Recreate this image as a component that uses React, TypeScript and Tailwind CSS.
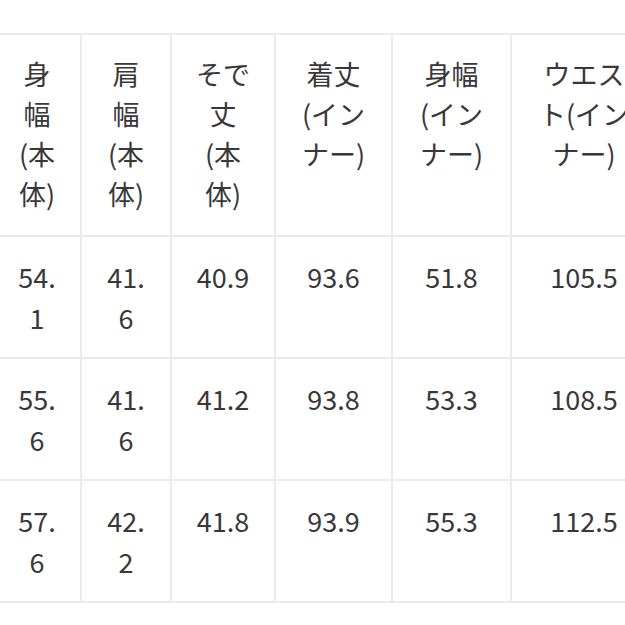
const font = { fontFamily: '"Noto Sans CJK JP", "Noto Sans", sans-serif' };

const headers: string[][] = [
  ["身", "幅", "(本", "体)"],
  ["肩", "幅", "(本", "体)"],
  ["そで", "丈", "(本", "体)"],
  ["着丈", "(イン", "ナー)"],
  ["身幅", "(イン", "ナー)"],
  ["ウエス", "ト(イン", "ナー)"],
];

const rows: string[][][] = [
  [["54.", "1"], ["41.", "6"], ["40.9"], ["93.6"], ["51.8"], ["105.5"]],
  [["55.", "6"], ["41.", "6"], ["41.2"], ["93.8"], ["53.3"], ["108.5"]],
  [["57.", "6"], ["42.", "2"], ["41.8"], ["93.9"], ["55.3"], ["112.5"]],
];

const widths = ["w-[88px]", "w-[90px]", "w-[104px]", "w-[117px]", "w-[119px]", "w-[146px]"];

const App = () => {
  return (
    <div className="w-[625px] h-[625px] overflow-hidden bg-white" style={font}>
      <table className="table-fixed border-collapse mt-[33px] -ml-[8px] w-[664px] text-[27px] text-[#383838]">
        <colgroup>
          {widths.map((w, i) => (
            <col key={i} className={w} />
          ))}
        </colgroup>
        <thead>
          <tr className="h-[202px]">
            {headers.map((lines, i) => (
              <th
                key={i}
                className="border-2 border-[#ebebeb] align-top pt-[19px] font-normal leading-[40px] text-center"
              >
                {lines.map((l, j) => (
                  <span key={j} className="block whitespace-nowrap">
                    {l}
                  </span>
                ))}
              </th>
            ))}
          </tr>
        </thead>
        <tbody>
          {rows.map((row, r) => (
            <tr key={r} className="h-[122px]">
              {row.map((lines, i) => (
                <td
                  key={i}
                  className="border-2 border-[#ebebeb] align-top pt-[19px] leading-[41px] text-center"
                >
                  {lines.map((l, j) => (
                    <span key={j} className="block whitespace-nowrap">
                      {l}
                    </span>
                  ))}
                </td>
              ))}
            </tr>
          ))}
        </tbody>
      </table>
    </div>
  );
};

export default App;
